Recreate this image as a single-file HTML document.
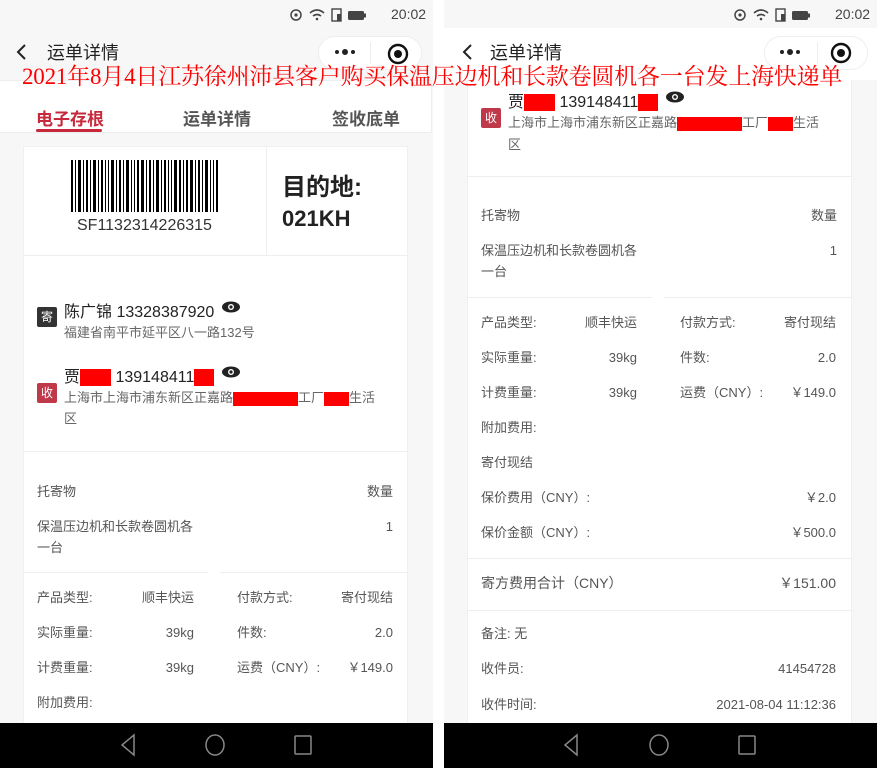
<!DOCTYPE html>
<html><head><meta charset="utf-8">
<style>
*{margin:0;padding:0;box-sizing:border-box}
body{width:877px;height:768px;position:relative;overflow:hidden;background:#fff;font-family:"Liberation Sans","Noto Sans CJK SC",sans-serif;color:#333}
.p{position:absolute;top:0;height:768px;width:433px;background:#f7f7f7;overflow:hidden}
.a{position:absolute;white-space:nowrap}
.s{font-size:13px;color:#555;line-height:14px}
.r{text-align:right}
.card{position:absolute;background:#fff;border:1px solid #f0f0f0}
.hl{position:absolute;height:1px;background:#eee}
.bar{position:absolute;left:0;width:100%;top:723px;height:45px;background:#000}
.red{display:inline-block;background:#f00;vertical-align:middle}
.badge{position:absolute;width:20px;height:20px;color:#fff;font-size:12px;text-align:center;line-height:20px;border-radius:2px}
</style></head><body>

<!-- LEFT PANEL -->
<div class="p" style="left:0">
  <svg class="a" style="left:288px;top:6px" width="100" height="16">
    <circle cx="8" cy="9" r="5" fill="none" stroke="#444" stroke-width="1.5"/><circle cx="8" cy="9" r="1.6" fill="#444"/>
    <path d="M22 7 q7 -6 14 0 M25 10 q4 -3 8 0" stroke="#444" stroke-width="1.6" fill="none"/><circle cx="29" cy="13" r="1.3" fill="#444"/>
    <rect x="44" y="3" width="9" height="12" fill="none" stroke="#444" stroke-width="1.4"/><rect x="49" y="8" width="4" height="7" fill="#444"/>
    <rect x="60" y="5" width="16" height="9" rx="1.5" fill="#444"/><rect x="76" y="7.5" width="2" height="4" fill="#444"/>
  </svg>
  <div class="a" style="left:391px;top:6px;font-size:14px;color:#444">20:02</div>

  <svg class="a" style="left:14px;top:43px" width="16" height="18"><path d="M11 2 L4 9 L11 16" stroke="#222" stroke-width="2" fill="none"/></svg>
  <div class="a" style="left:47px;top:39px;font-size:18px;color:#222">运单详情</div>
  <div class="a" style="left:318px;top:36px;width:104px;height:34px;border:1px solid #eee;border-radius:17px;background:#fff"></div>
  <div class="a" style="left:370px;top:42px;width:1px;height:22px;background:#eee"></div>
  <svg class="a" style="left:333px;top:45px" width="24" height="14"><circle cx="4" cy="7" r="2" fill="#222"/><circle cx="12" cy="7" r="3" fill="#222"/><circle cx="20" cy="7" r="2" fill="#222"/></svg>
  <svg class="a" style="left:386px;top:42px" width="24" height="24"><circle cx="12" cy="12" r="9" fill="none" stroke="#111" stroke-width="2.4"/><circle cx="12" cy="12" r="4" fill="#111"/></svg>

  <div class="a" style="left:0;top:80px;width:432px;height:53px;background:#fff;border-top:1px solid #eee;border-bottom:1px solid #eee;border-right:1px solid #eee"></div>
  <div class="a" style="left:36px;top:105px;font-size:17px;font-weight:bold;color:#c8283c">电子存根</div>
  <div class="a" style="left:36px;top:129px;width:66px;height:3px;background:#c8283c;border-radius:2px"></div>
  <div class="a" style="left:183px;top:105px;font-size:17px;font-weight:bold;color:#555">运单详情</div>
  <div class="a" style="left:332px;top:105px;font-size:17px;font-weight:bold;color:#555">签收底单</div>

  <div class="card" style="left:23px;top:146px;width:385px;height:600px"></div>
  <div class="a" style="left:266px;top:146px;width:1px;height:109px;background:#eee"></div>
  <svg class="a" style="left:71px;top:160px" width="147" height="52">
    <g fill="#000">
    <rect x="0" width="2" height="52"/><rect x="4" width="1" height="52"/><rect x="7" width="3" height="52"/><rect x="12" width="1" height="52"/><rect x="15" width="2" height="52"/><rect x="19" width="1" height="52"/><rect x="22" width="3" height="52"/><rect x="27" width="1" height="52"/><rect x="30" width="2" height="52"/><rect x="34" width="1" height="52"/><rect x="37" width="1" height="52"/><rect x="40" width="3" height="52"/><rect x="45" width="1" height="52"/><rect x="48" width="2" height="52"/><rect x="52" width="1" height="52"/><rect x="55" width="3" height="52"/><rect x="60" width="1" height="52"/><rect x="63" width="1" height="52"/><rect x="66" width="2" height="52"/><rect x="70" width="3" height="52"/><rect x="75" width="1" height="52"/><rect x="78" width="2" height="52"/><rect x="82" width="1" height="52"/><rect x="85" width="3" height="52"/><rect x="90" width="1" height="52"/><rect x="93" width="2" height="52"/><rect x="97" width="1" height="52"/><rect x="100" width="1" height="52"/><rect x="103" width="3" height="52"/><rect x="108" width="2" height="52"/><rect x="112" width="1" height="52"/><rect x="115" width="2" height="52"/><rect x="119" width="3" height="52"/><rect x="124" width="1" height="52"/><rect x="127" width="2" height="52"/><rect x="131" width="1" height="52"/><rect x="134" width="3" height="52"/><rect x="139" width="1" height="52"/><rect x="142" width="1" height="52"/><rect x="145" width="2" height="52"/>
    </g></svg>
  <div class="a" style="left:77px;top:217px;font-size:16px;color:#333">SF1132314226315</div>
  <div class="a" style="left:282px;top:167px;font-size:24px;font-weight:bold;color:#222">目的地:</div>
  <div class="a" style="left:282px;top:206px;font-size:22px;font-weight:bold;color:#222">021KH</div>
  <div class="hl" style="left:23px;top:255px;width:385px"></div>

  <div class="badge" style="left:37px;top:307px;background:#333">寄</div>
  <div class="a" style="left:64px;top:298px;font-size:16px;color:#222">陈广锦 13328387920</div>
  <svg class="a" style="left:221px;top:300px" width="20" height="14"><ellipse cx="10" cy="7" rx="9" ry="5.5" fill="#222"/><circle cx="10" cy="7" r="3" fill="#fff"/><circle cx="10" cy="7" r="1.6" fill="#222"/></svg>
  <div class="a" style="left:64px;top:322px;font-size:13px;color:#666">福建省南平市延平区八一路132号</div>

  <div class="a" style="left:64px;top:363px;font-size:16px;color:#222">贾<span class="red" style="width:31px;height:17px"></span> 139148411<span class="red" style="width:20px;height:17px"></span></div>
  <svg class="a" style="left:221px;top:365px" width="20" height="14"><ellipse cx="10" cy="7" rx="9" ry="5.5" fill="#222"/><circle cx="10" cy="7" r="3" fill="#fff"/><circle cx="10" cy="7" r="1.6" fill="#222"/></svg>
  <div class="badge" style="left:37px;top:383px;background:#c0394b">收</div>
  <div class="a" style="left:64px;top:387px;font-size:13px;color:#666">上海市上海市浦东新区正嘉路<span class="red" style="width:65px;height:14px"></span>工厂<span class="red" style="width:25px;height:14px"></span>生活</div>
  <div class="a" style="left:64px;top:408px;font-size:13px;color:#666">区</div>
  <div class="hl" style="left:23px;top:451px;width:385px"></div>

  <div class="a s" style="left:37px;top:485px">托寄物</div>
  <div class="a s r" style="left:300px;width:93px;top:485px">数量</div>
  <div class="a s" style="left:37px;top:520px">保温压边机和长款卷圆机各</div>
  <div class="a s" style="left:37px;top:541px">一台</div>
  <div class="a s r" style="left:300px;width:93px;top:520px">1</div>
  <div class="hl" style="left:23px;top:572px;width:185px"></div>
  <div class="hl" style="left:220px;top:572px;width:188px"></div>

  <div class="a s" style="left:37px;top:591px">产品类型:</div><div class="a s r" style="left:100px;width:94px;top:591px">顺丰快运</div>
  <div class="a s" style="left:237px;top:591px">付款方式:</div><div class="a s r" style="left:300px;width:93px;top:591px">寄付现结</div>
  <div class="a s" style="left:37px;top:626px">实际重量:</div><div class="a s r" style="left:100px;width:94px;top:626px">39kg</div>
  <div class="a s" style="left:237px;top:626px">件数:</div><div class="a s r" style="left:300px;width:93px;top:626px">2.0</div>
  <div class="a s" style="left:37px;top:661px">计费重量:</div><div class="a s r" style="left:100px;width:94px;top:661px">39kg</div>
  <div class="a s" style="left:237px;top:661px">运费（CNY）:</div><div class="a s r" style="left:300px;width:93px;top:661px">￥149.0</div>
  <div class="a s" style="left:37px;top:696px">附加费用:</div>

  <div class="bar"><svg width="433" height="45">
    <path d="M134 12 L122 22 L134 32Z" fill="none" stroke="#888" stroke-width="1.5"/>
    <ellipse cx="215" cy="22" rx="9" ry="10" fill="none" stroke="#888" stroke-width="1.5"/>
    <rect x="295" y="13" width="16" height="18" rx="1" fill="none" stroke="#888" stroke-width="1.5"/>
  </svg></div>
</div>

<!-- RIGHT PANEL -->
<div class="p" style="left:444px">
  <svg class="a" style="left:288px;top:6px" width="100" height="16">
    <circle cx="8" cy="9" r="5" fill="none" stroke="#444" stroke-width="1.5"/><circle cx="8" cy="9" r="1.6" fill="#444"/>
    <path d="M22 7 q7 -6 14 0 M25 10 q4 -3 8 0" stroke="#444" stroke-width="1.6" fill="none"/><circle cx="29" cy="13" r="1.3" fill="#444"/>
    <rect x="44" y="3" width="9" height="12" fill="none" stroke="#444" stroke-width="1.4"/><rect x="49" y="8" width="4" height="7" fill="#444"/>
    <rect x="60" y="5" width="16" height="9" rx="1.5" fill="#444"/><rect x="76" y="7.5" width="2" height="4" fill="#444"/>
  </svg>
  <div class="a" style="left:391px;top:6px;font-size:14px;color:#444">20:02</div>
  <div class="a" style="left:0;top:28px;width:433px;height:52px;background:#fff"></div>
  <svg class="a" style="left:16px;top:43px" width="16" height="18"><path d="M11 2 L4 9 L11 16" stroke="#222" stroke-width="2" fill="none"/></svg>
  <div class="a" style="left:46px;top:39px;font-size:18px;color:#222">运单详情</div>
  <div class="a" style="left:320px;top:36px;width:104px;height:34px;border:1px solid #eee;border-radius:17px;background:#fff"></div>
  <div class="a" style="left:373px;top:42px;width:1px;height:22px;background:#eee"></div>
  <svg class="a" style="left:334px;top:45px" width="24" height="14"><circle cx="4" cy="7" r="2" fill="#222"/><circle cx="12" cy="7" r="3" fill="#222"/><circle cx="20" cy="7" r="2" fill="#222"/></svg>
  <svg class="a" style="left:385px;top:41px" width="24" height="24"><circle cx="12" cy="12" r="9" fill="none" stroke="#111" stroke-width="2.4"/><circle cx="12" cy="12" r="4" fill="#111"/></svg>

  <div class="card" style="left:23px;top:80px;width:385px;height:680px;border-top:none"></div>
  <div class="a" style="left:64px;top:88px;font-size:16px;color:#222">贾<span class="red" style="width:31px;height:17px"></span> 139148411<span class="red" style="width:20px;height:17px"></span></div>
  <svg class="a" style="left:221px;top:90px" width="20" height="14"><ellipse cx="10" cy="7" rx="9" ry="5.5" fill="#222"/><circle cx="10" cy="7" r="3" fill="#fff"/><circle cx="10" cy="7" r="1.6" fill="#222"/></svg>
  <div class="badge" style="left:37px;top:108px;background:#c0394b">收</div>
  <div class="a" style="left:64px;top:112px;font-size:13px;color:#666">上海市上海市浦东新区正嘉路<span class="red" style="width:65px;height:14px"></span>工厂<span class="red" style="width:25px;height:14px"></span>生活</div>
  <div class="a" style="left:64px;top:134px;font-size:13px;color:#666">区</div>
  <div class="hl" style="left:23px;top:176px;width:385px"></div>

  <div class="a s" style="left:37px;top:209px">托寄物</div>
  <div class="a s r" style="left:300px;width:93px;top:209px">数量</div>
  <div class="a s" style="left:37px;top:244px">保温压边机和长款卷圆机各</div>
  <div class="a s" style="left:37px;top:265px">一台</div>
  <div class="a s r" style="left:300px;width:93px;top:244px">1</div>
  <div class="hl" style="left:23px;top:297px;width:185px"></div>
  <div class="hl" style="left:220px;top:297px;width:188px"></div>

  <div class="a s" style="left:37px;top:316px">产品类型:</div><div class="a s r" style="left:100px;width:93px;top:316px">顺丰快运</div>
  <div class="a s" style="left:236px;top:316px">付款方式:</div><div class="a s r" style="left:300px;width:92px;top:316px">寄付现结</div>
  <div class="a s" style="left:37px;top:351px">实际重量:</div><div class="a s r" style="left:100px;width:93px;top:351px">39kg</div>
  <div class="a s" style="left:236px;top:351px">件数:</div><div class="a s r" style="left:300px;width:92px;top:351px">2.0</div>
  <div class="a s" style="left:37px;top:386px">计费重量:</div><div class="a s r" style="left:100px;width:93px;top:386px">39kg</div>
  <div class="a s" style="left:236px;top:386px">运费（CNY）:</div><div class="a s r" style="left:300px;width:92px;top:386px">￥149.0</div>
  <div class="a s" style="left:37px;top:421px">附加费用:</div>
  <div class="a s" style="left:37px;top:456px">寄付现结</div>
  <div class="a s" style="left:37px;top:491px">保价费用（CNY）:</div><div class="a s r" style="left:300px;width:92px;top:491px">￥2.0</div>
  <div class="a s" style="left:37px;top:526px">保价金额（CNY）:</div><div class="a s r" style="left:300px;width:92px;top:526px">￥500.0</div>
  <div class="hl" style="left:23px;top:558px;width:385px"></div>
  <div class="a s" style="left:37px;top:576px;font-size:14px">寄方费用合计（CNY）</div><div class="a s r" style="left:280px;width:112px;top:576px;font-size:14px">￥151.00</div>
  <div class="hl" style="left:23px;top:610px;width:385px"></div>
  <div class="a s" style="left:37px;top:627px">备注: 无</div>
  <div class="a s" style="left:37px;top:662px">收件员:</div><div class="a s r" style="left:280px;width:112px;top:662px">41454728</div>
  <div class="a s" style="left:37px;top:698px">收件时间:</div><div class="a s r" style="left:230px;width:162px;top:698px">2021-08-04 11:12:36</div>

  <div class="bar"><svg width="433" height="45">
    <path d="M133 12 L121 22 L133 32Z" fill="none" stroke="#888" stroke-width="1.5"/>
    <ellipse cx="215" cy="22" rx="9" ry="10" fill="none" stroke="#888" stroke-width="1.5"/>
    <rect x="295" y="13" width="16" height="18" rx="1" fill="none" stroke="#888" stroke-width="1.5"/>
  </svg></div>
</div>

<!-- overlay title -->
<div class="a" style="left:22px;top:63px;font-size:23px;line-height:28px;color:#f00;font-family:'Liberation Serif','Noto Serif CJK SC',serif;letter-spacing:-0.2px">2021年8月4日江苏徐州沛县客户购买保温压边机和长款卷圆机各一台发上海快递单</div>
</body></html>
